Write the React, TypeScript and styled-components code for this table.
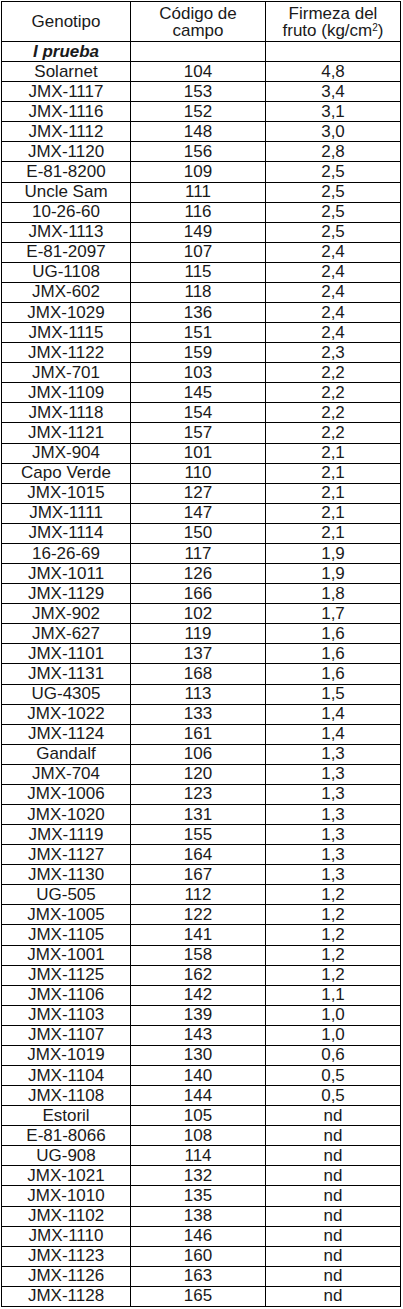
import styled, { createGlobalStyle } from "styled-components";

const GlobalStyle = createGlobalStyle`
  html, body {
    margin: 0;
    padding: 0;
    background: #ffffff;
  }
  body {
    font-family: "Liberation Sans", Arial, sans-serif;
    color: #1a1a1a;
  }
`;

const Sheet = styled.div`
  display: grid;
  grid-template-columns: 129px 135px 135px;
  grid-template-rows: 40px;
  grid-auto-rows: 20.08px;
  width: max-content;
  margin: 1px 0 0 1px;
  border-left: 1px solid #000;
  border-top: 1px solid #000;
`;

const Row = styled.div`
  display: contents;
`;

const Cell = styled.div<{ $section?: boolean }>`
  box-sizing: border-box;
  display: flex;
  align-items: center;
  justify-content: center;
  text-align: center;
  border-right: 1px solid #000;
  border-bottom: 1px solid #000;
  font-size: 17px;
  line-height: 20px;
  font-weight: ${(p) => (p.$section ? 700 : 400)};
  font-style: ${(p) => (p.$section ? "italic" : "normal")};
  white-space: nowrap;
  overflow: hidden;
`;

const HeadText = styled.span`
  display: block;
  line-height: 17px;
`;

const Sup = styled.sup`
  font-size: 10px;
  line-height: 0;
  vertical-align: 5px;
`;

const rows: [string, string, string][] = [
  ["Solarnet", "104", "4,8"],
  ["JMX-1117", "153", "3,4"],
  ["JMX-1116", "152", "3,1"],
  ["JMX-1112", "148", "3,0"],
  ["JMX-1120", "156", "2,8"],
  ["E-81-8200", "109", "2,5"],
  ["Uncle Sam", "111", "2,5"],
  ["10-26-60", "116", "2,5"],
  ["JMX-1113", "149", "2,5"],
  ["E-81-2097", "107", "2,4"],
  ["UG-1108", "115", "2,4"],
  ["JMX-602", "118", "2,4"],
  ["JMX-1029", "136", "2,4"],
  ["JMX-1115", "151", "2,4"],
  ["JMX-1122", "159", "2,3"],
  ["JMX-701", "103", "2,2"],
  ["JMX-1109", "145", "2,2"],
  ["JMX-1118", "154", "2,2"],
  ["JMX-1121", "157", "2,2"],
  ["JMX-904", "101", "2,1"],
  ["Capo Verde", "110", "2,1"],
  ["JMX-1015", "127", "2,1"],
  ["JMX-1111", "147", "2,1"],
  ["JMX-1114", "150", "2,1"],
  ["16-26-69", "117", "1,9"],
  ["JMX-1011", "126", "1,9"],
  ["JMX-1129", "166", "1,8"],
  ["JMX-902", "102", "1,7"],
  ["JMX-627", "119", "1,6"],
  ["JMX-1101", "137", "1,6"],
  ["JMX-1131", "168", "1,6"],
  ["UG-4305", "113", "1,5"],
  ["JMX-1022", "133", "1,4"],
  ["JMX-1124", "161", "1,4"],
  ["Gandalf", "106", "1,3"],
  ["JMX-704", "120", "1,3"],
  ["JMX-1006", "123", "1,3"],
  ["JMX-1020", "131", "1,3"],
  ["JMX-1119", "155", "1,3"],
  ["JMX-1127", "164", "1,3"],
  ["JMX-1130", "167", "1,3"],
  ["UG-505", "112", "1,2"],
  ["JMX-1005", "122", "1,2"],
  ["JMX-1105", "141", "1,2"],
  ["JMX-1001", "158", "1,2"],
  ["JMX-1125", "162", "1,2"],
  ["JMX-1106", "142", "1,1"],
  ["JMX-1103", "139", "1,0"],
  ["JMX-1107", "143", "1,0"],
  ["JMX-1019", "130", "0,6"],
  ["JMX-1104", "140", "0,5"],
  ["JMX-1108", "144", "0,5"],
  ["Estoril", "105", "nd"],
  ["E-81-8066", "108", "nd"],
  ["UG-908", "114", "nd"],
  ["JMX-1021", "132", "nd"],
  ["JMX-1010", "135", "nd"],
  ["JMX-1102", "138", "nd"],
  ["JMX-1110", "146", "nd"],
  ["JMX-1123", "160", "nd"],
  ["JMX-1126", "163", "nd"],
  ["JMX-1128", "165", "nd"],
];

export default function App() {
  return (
    <>
      <GlobalStyle />
      <Sheet>
        <Row>
          <Cell>
            <HeadText>Genotipo</HeadText>
          </Cell>
          <Cell>
            <HeadText>
              Código de
              <br />
              campo
            </HeadText>
          </Cell>
          <Cell>
            <HeadText>
              Firmeza del
              <br />
              fruto (kg/cm<Sup>2</Sup>)
            </HeadText>
          </Cell>
        </Row>
        <Row>
          <Cell $section>I prueba</Cell>
          <Cell />
          <Cell />
        </Row>
        {rows.map(([name, code, value]) => (
          <Row key={name}>
            <Cell>{name}</Cell>
            <Cell>{code}</Cell>
            <Cell>{value}</Cell>
          </Row>
        ))}
      </Sheet>
    </>
  );
}
